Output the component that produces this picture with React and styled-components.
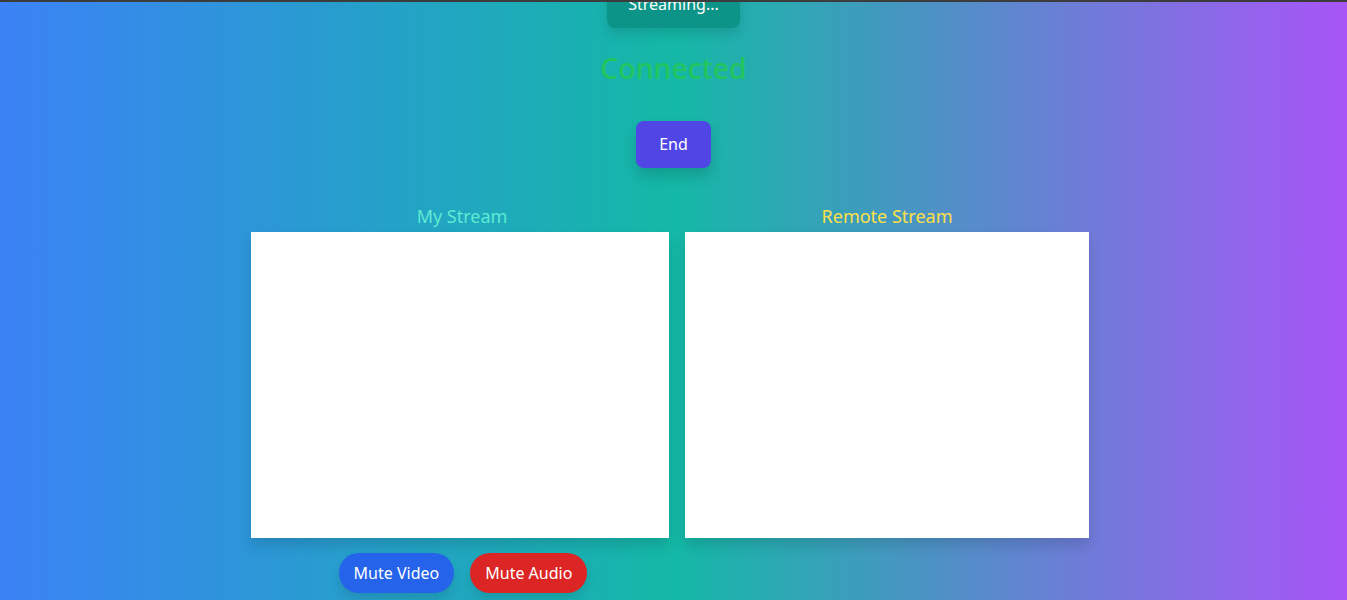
import React from 'react'
import styled, { createGlobalStyle } from 'styled-components'

const Global = createGlobalStyle`
  html, body {
    margin: 0;
    padding: 0;
    height: 100%;
    overflow: hidden;
  }
  body {
    font-family: "Segoe UI", "Noto Sans", "Open Sans", sans-serif;
  }
`

const TopEdge = styled.div`
  position: fixed;
  top: 0;
  left: 0;
  right: 0;
  height: 2px;
  background: #3c3c3c;
  z-index: 10;
`

const Page = styled.div`
  min-height: 600px;
  background: linear-gradient(to right, #3b82f6, #14b8a6, #a855f7);
  display: flex;
  flex-direction: column;
  align-items: center;
  color: #fff;
`

const StatusButton = styled.button`
  margin-top: -20px;
  padding: 12px 21px;
  border: none;
  border-radius: 8px;
  background: #0d9488;
  color: #fff;
  font: inherit;
  font-size: 16px;
  line-height: 24px;
  box-shadow: 0 6px 12px rgba(0, 0, 0, 0.12);
`

const Status = styled.h2`
  margin: 22px 0 0;
  font-size: 28.5px;
  line-height: 36px;
  font-weight: 500;
  color: #22c55e;
`

const EndButton = styled.button`
  margin-top: 35px;
  padding: 12px 23px;
  border: none;
  border-radius: 8px;
  background: #4f46e5;
  color: #fff;
  font: inherit;
  font-size: 16px;
  line-height: 23px;
  box-shadow: 0 8px 14px rgba(0, 0, 0, 0.15);
`

const Streams = styled.div`
  margin-top: 34px;
  display: flex;
  gap: 16px;
  margin-left: -7px;
`

const Column = styled.div`
  display: flex;
  flex-direction: column;
  align-items: center;
`

const Title = styled.h3`
  margin: 0 0 2px;
  padding-left: ${p => p.$shift || 0}px;
  font-size: 18px;
  line-height: 28px;
  font-weight: 400;
  color: ${p => p.$color};
`

const Video = styled.div`
  width: ${p => p.$w}px;
  height: 306px;
  background: #fff;
  box-shadow: 0 8px 12px rgba(0, 0, 0, 0.12);
`

const Controls = styled.div`
  margin-top: 15px;
  padding-left: 6px;
  display: flex;
  gap: 16px;
`

const Pill = styled.button`
  padding: 8px 15px;
  border: none;
  border-radius: 9999px;
  background: ${p => p.$bg};
  color: #fff;
  font: inherit;
  font-size: 16px;
  line-height: 24px;
  box-shadow: 0 6px 10px rgba(0, 0, 0, 0.1);
`

export default function App() {
  return (
    <>
      <Global />
      <TopEdge />
      <Page>
        <StatusButton>Streaming...</StatusButton>
        <Status>Connected</Status>
        <EndButton>End</EndButton>
        <Streams>
          <Column>
            <Title $color="#5eead4" $shift={4}>My Stream</Title>
            <Video $w={418} />
            <Controls>
              <Pill $bg="#2563eb">Mute Video</Pill>
              <Pill $bg="#dc2626">Mute Audio</Pill>
            </Controls>
          </Column>
          <Column>
            <Title $color="#fde047">Remote Stream</Title>
            <Video $w={404} />
          </Column>
        </Streams>
      </Page>
    </>
  )
}
